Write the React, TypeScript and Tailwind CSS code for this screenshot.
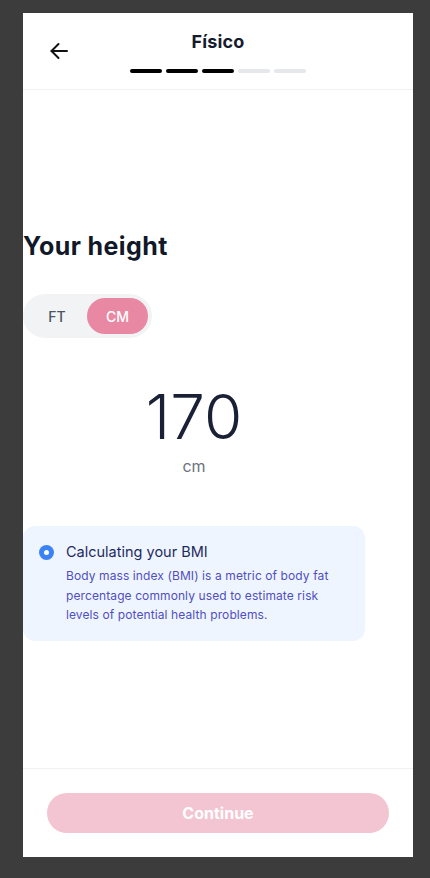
import React from "react";

export default function App() {
  const bars = [true, true, true, false, false];
  return (
    <div className="min-h-[878px] w-full bg-[#3c3c3c] pt-[13px] pl-[23px]" style={{ fontFamily: "Inter, 'Noto Sans', sans-serif" }}>
      <div className="flex h-[844px] w-[390px] flex-col bg-white">
        {/* Header */}
        <div className="grid grid-cols-[1fr_auto_1fr] border-b border-[#f1f1f3] pt-[17px] pb-[16px]">
          <div className="pl-[27px] pt-[12px]">
            <svg width="18" height="18" viewBox="0 0 18 18" fill="none" stroke="#111111" strokeWidth="2" strokeLinecap="round" strokeLinejoin="round">
              <path d="M17 9H1.5" />
              <path d="M8.5 2 1.5 9l7 7" />
            </svg>
          </div>
          <div className="flex flex-col items-center">
            <div className="text-[18px] leading-6 font-bold text-[#161b2e] tracking-[0.2px]">Físico</div>
            <div className="mt-[15px] flex gap-1">
              {bars.map((on, i) => (
                <div key={i} className={on ? "h-1 w-8 rounded-full bg-black" : "h-1 w-8 rounded-full bg-[#e5e7eb]"} />
              ))}
            </div>
          </div>
          <div />
        </div>

        {/* Content */}
        <div className="flex-1 pt-[140px]">
          <div className="w-[342px]">
            <h1 className="text-[25px] leading-8 font-bold tracking-[0.4px] text-[#111827]">Your height</h1>
            <div className="mt-[32px] inline-flex rounded-full bg-[#f2f3f5] p-1">
              <button className="h-9 w-[60px] rounded-full text-[14px] font-medium text-[#4b5563]">FT</button>
              <button className="h-9 w-[61px] rounded-full bg-[#e888a3] text-[14px] font-medium text-white">CM</button>
            </div>
            <div className="mt-[48px] flex flex-col items-center">
              <div className="text-[62px] leading-none font-light text-[#1a2035]">170</div>
              <div className="mt-[6px] text-[16px] leading-6 text-[#6b7280]">cm</div>
            </div>
            <div className="mt-[48px] flex gap-3 rounded-xl bg-[#eff5ff] p-4">
              <div className="mt-[3px] flex h-[15px] w-[15px] shrink-0 items-center justify-center rounded-full bg-[#3b82f6]">
                <div className="h-[5px] w-[5px] rounded-full bg-white" />
              </div>
              <div>
                <div className="text-[14.5px] leading-5 text-[#1e2a5e]">Calculating your BMI</div>
                <p className="mt-1 text-[12px] leading-[19.5px] tracking-[0.1px] text-[#4f4fc0]">
                  Body mass index (BMI) is a metric of body fat percentage commonly used to estimate risk levels of potential health problems.
                </p>
              </div>
            </div>
          </div>
        </div>

        {/* Footer */}
        <div className="border-t border-[#f1f1f3] px-6 pt-6 pb-6">
          <button className="h-10 w-full rounded-full bg-[#f3c4d1] text-[16px] font-bold text-white">Continue</button>
        </div>
      </div>
    </div>
  );
}
